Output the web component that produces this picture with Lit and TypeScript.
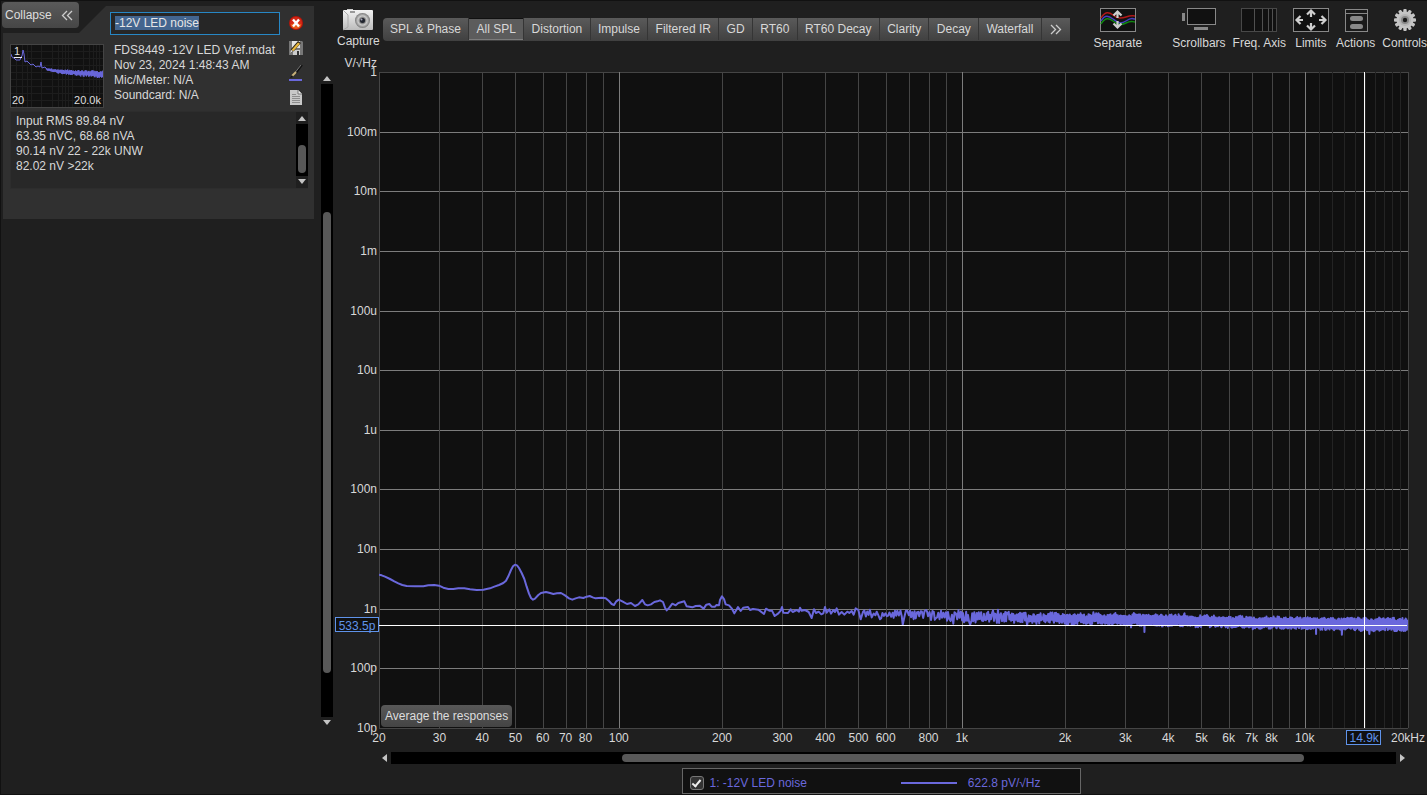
import { LitElement, html, svg, css } from "lit";
import { customElement, state, query } from "lit/decorators.js";
import { classMap } from "lit/directives/class-map.js";

const TABS = [
  "SPL & Phase", "All SPL", "Distortion", "Impulse", "Filtered IR", "GD",
  "RT60", "RT60 Decay", "Clarity", "Decay", "Waterfall",
];

const F_MIN = 20;
const DECADES_X = 3;
const DECADES_Y = 11;

const xPct = (f: number) => `${(Math.log10(f / F_MIN) / DECADES_X) * 100}%`;
const yPct = (v: number) => `${(-Math.log10(v) / DECADES_Y) * 100}%`;

const Y_LABELS = ["1", "100m", "10m", "1m", "100u", "10u", "1u", "100n", "10n", "1n", "100p", "10p"];

const X_LABELS: [number, string][] = [
  [20, "20"], [30, "30"], [40, "40"], [50, "50"], [60, "60"], [70, "70"], [80, "80"],
  [100, "100"], [200, "200"], [300, "300"], [400, "400"], [500, "500"], [600, "600"], [800, "800"],
  [1000, "1k"], [2000, "2k"], [3000, "3k"], [4000, "4k"], [5000, "5k"], [6000, "6k"],
  [7000, "7k"], [8000, "8k"], [10000, "10k"], [20000, "20kHz"],
];

const MINOR = [30, 40, 50, 60, 70, 80, 90, 200, 300, 400, 500, 600, 700, 800, 900,
  2000, 3000, 4000, 5000, 6000, 7000, 8000, 9000];
const FINE = [11, 12, 13, 14, 15, 16, 17, 18, 19].map((k) => k * 1000);
const MAJOR = [100, 1000, 10000];

// Low-frequency part of the spectrum, x/y pairs in trace units.
const LOW: number[] = [
  132, 134, 140, 136, 150, 140, 165, 147, 178, 154, 190, 160, 202, 165, 215, 168, 240, 169, 265, 169, 280, 166, 298, 165,
  312, 167, 325, 173, 340, 177, 355, 177, 370, 175, 388, 175, 405, 178, 425, 180, 445, 179, 465, 175, 478, 170,
  492, 165, 505, 159, 513, 152, 520, 139, 528, 120, 534, 109, 540, 104, 546, 106, 552, 114, 560, 129, 568, 147,
  575, 170, 582, 191, 588, 204, 594, 209, 600, 206, 610, 195, 618, 189, 633, 186, 645, 189, 655, 192, 666, 190,
  678, 189, 690, 196, 702, 205, 712, 209, 722, 205, 732, 202, 745, 204, 755, 200, 764, 198, 773, 202, 782, 205,
  800, 203, 812, 205, 822, 213, 830, 222, 837, 225, 843, 215, 851, 209, 862, 214, 876, 222, 888, 219, 900, 228,
  910, 223, 922, 210, 930, 223, 938, 226, 948, 223, 958, 216, 967, 214, 975, 211, 984, 216, 990, 233, 995, 241,
  1003, 233, 1012, 221, 1022, 226, 1030, 219, 1048, 214, 1055, 229, 1072, 232, 1082, 228, 1094, 227, 1106, 236,
  1114, 224, 1123, 222, 1130, 230, 1140, 230, 1144, 225, 1152, 226, 1155, 210, 1161, 199, 1167, 207, 1172, 223,
  1182, 226, 1190, 235, 1198, 250, 1204, 240, 1209, 231, 1217, 243, 1225, 233, 1239, 231, 1245, 240, 1254, 237,
  1270, 239, 1287, 252, 1293, 236, 1303, 242, 1311, 242, 1319, 258, 1330, 250, 1337, 242, 1341, 231, 1345, 248,
  1359, 249, 1367, 238, 1373, 246, 1385, 240, 1392, 245, 1395, 233, 1400, 242, 1410, 240, 1421, 246, 1430, 264,
  1437, 238, 1443, 249, 1451, 245, 1459, 253, 1465, 250, 1470, 231, 1475, 248, 1483, 238, 1488, 251, 1495, 240,
  1500, 246, 1505, 235, 1512, 254, 1520, 246, 1528, 254, 1537, 245, 1543, 249, 1550, 243, 1556, 254, 1562, 235,
  1570, 240, 1577, 268, 1584, 246,
];

// Noise envelope: x, upper edge, lower edge.
const ENVELOPE: [number, number, number][] = [
  [1584, 240, 264], [1700, 240, 263], [1790, 241, 268], [1895, 245, 277], [2095, 248, 277],
  [2195, 251, 281], [2290, 253, 283], [2500, 254, 287], [2650, 260, 291], [2800, 261, 295],
  [2950, 264, 298], [3219, 266, 304],
];

// Single bins that stand well outside the envelope.
const SPIKES: [number, number][] = [
  [1635, 268], [1702, 284], [1772, 240], [1852, 281], [1904, 284], [1974, 241], [1988, 239],
  [2076, 286], [2274, 247], [2388, 292], [2428, 306], [2548, 250], [2943, 312], [3020, 314], [3103, 312],
];

function random(seed: number) {
  return () => {
    seed = (seed * 1103515245 + 12345) % 2147483648;
    return seed / 2147483648;
  };
}

function buildTrace(): string {
  const pts: string[] = [];
  for (let i = 0; i < LOW.length; i += 2) pts.push(`${LOW[i]},${LOW[i + 1]}`);
  const rnd = random(90421);
  let x = 1588;
  let seg = 0;
  let spike = 0;
  let up = true;
  let drift = 0;
  while (x < 3218) {
    while (seg < ENVELOPE.length - 2 && x > ENVELOPE[seg + 1][0]) seg++;
    const [x0, t0, b0] = ENVELOPE[seg];
    const [x1, t1, b1] = ENVELOPE[seg + 1];
    const k = (x - x0) / (x1 - x0);
    const top = t0 + (t1 - t0) * k;
    const bottom = b0 + (b1 - b0) * k;
    const full = Math.min(1, (x - 1588) / 900);
    drift = drift * 0.8 + (rnd() - 0.5) * 4;
    const low = 0.15 + 0.4 * full;
    const reach = low + (1.05 - low) * rnd();
    const mid = (top + bottom) / 2 + drift;
    let y = mid + (up ? -1 : 1) * reach * (bottom - top) * 0.5;
    if (spike < SPIKES.length && x >= SPIKES[spike][0]) y = SPIKES[spike++][1];
    pts.push(`${x.toFixed(1)},${y.toFixed(1)}`);
    up = rnd() > 0.12 ? !up : up;
    x += Math.max(1.2, 4.5 * (1 - (x - 1588) / 1000)) * (0.7 + 0.6 * rnd());
  }
  return pts.join(" ");
}

const TRACE = buildTrace();

function buildThumbTrace(): string {
  const pts = ["0,10 1,13 3,14 5,16 9,16 10,13 11,12 12,6 13,10 14,18 16,17 18,19 20,21 22,20 25,23 27,22 29,23 30,18 31,24 34,23"];
  const rnd = random(771);
  for (let i = 0; i <= 142; i++) {
    const x = 35 + i * 0.4;
    const k = i / 142;
    const centre = 24.5 + 6 * Math.sqrt(k);
    const amp = (0.8 + 3.2 * Math.sqrt(k)) * (0.4 + 0.6 * rnd());
    pts.push(`${x.toFixed(1)},${(centre + (i % 2 ? amp : -amp)).toFixed(1)}`);
  }
  return pts.join(" ");
}

const THUMB_TRACE = buildThumbTrace();

const base = css`
  *, *::before, *::after { box-sizing: border-box; }
  button { margin: 0; padding: 0; border: 0; background: none; font: inherit; color: inherit; cursor: default; }
  svg { display: block; }
`;

@customElement("scroll-bar")
class ScrollBar extends LitElement {
  static properties = {
    vertical: { type: Boolean, reflect: true },
    start: { type: Number },
    size: { type: Number },
  };
  declare vertical: boolean;
  declare start: number;
  declare size: number;

  static styles = [base, css`
    :host { display: flex; height: 12px; align-items: stretch; }
    :host([vertical]) { flex-direction: column; width: 12px; height: auto; }
    .arrow { flex: none; width: 12px; height: 12px; display: grid; place-items: center; background: #1f1f1f; }
    .arrow path { fill: #c4c4c4; }
    .track { flex: 1; min-height: 0; background: #000; display: flex; padding: 2px 0; }
    :host([vertical]) .track { flex-direction: column; padding: 0 2px; }
    .thumb { flex: none; background: #585858; border-radius: 4px; }
  `];

  render() {
    const v = this.vertical;
    return html`
      <button class="arrow" aria-label=${v ? "Scroll up" : "Scroll left"}>
        <svg width="10" height="10">${v ? svg`<path d="M1 8L5 3L9 8Z"/>` : svg`<path d="M7 1L2 5L7 9Z"/>`}</svg>
      </button>
      <div class="track">
        <div style=${v ? `height:${this.start}%` : `width:${this.start}%`}></div>
        <div class="thumb" style=${v ? `height:${this.size}%` : `width:${this.size}%`}></div>
      </div>
      <button class="arrow" aria-label=${v ? "Scroll down" : "Scroll right"}>
        <svg width="10" height="10">${v ? svg`<path d="M1 2L5 7L9 2Z"/>` : svg`<path d="M3 1L8 5L3 9Z"/>`}</svg>
      </button>`;
  }
}

@customElement("measurement-panel")
class MeasurementPanel extends LitElement {
  @query(".name") nameInput!: HTMLInputElement;

  static styles = [base, css`
    :host { display: block; position: relative; padding: 5px 7px 0 2px; }
    .collapse {
      position: absolute; left: 1px; top: 1px; width: 77px; height: 26px; padding: 0 6px 0 3px;
      display: flex; align-items: center; justify-content: space-between;
      border-radius: 4px; background: linear-gradient(#5a5a5a, #464646); color: #ddd;
    }
    .panel {
      display: grid; grid-template-columns: 94px 170px 1fr; column-gap: 6px;
      grid-template-rows: 23px auto auto; padding: 6px 6px 30px 7px; background: #303030;
      clip-path: polygon(103px 0, 100% 0, 100% 100%, 0 100%, 0 27px, 76px 27px);
    }
    .name {
      grid-column: 2; width: 100%; height: 23px; padding: 0 4px 1px; border: 1px solid #2787c5;
      background: #262626; color: #ddd; font: inherit; line-height: 16px; outline: none;
    }
    .name::selection { background: #43658f; color: #e6e6e6; }
    .thumb { grid-column: 1; grid-row: 2; margin-top: 9px; }
    .thumb text { fill: #ddd; font-size: 11px; }
    .info { grid-column: 2; grid-row: 2; margin-top: 8px; padding-left: 4px; line-height: 15px; white-space: nowrap; }
    .tools {
      grid-column: 3; grid-row: 1 / 3; display: flex; flex-direction: column; align-items: center;
      gap: 9px; padding-top: 3px; margin-right: 3px;
    }
    .notes {
      grid-column: 1 / -1; grid-row: 3; display: flex; height: 78px; margin-top: 3px;
      background: #282828; border: 1px solid #2d2d2d; border-right: 0;
    }
    .notes p { flex: 1; margin: 0; padding: 2px 5px; line-height: 15px; }
  `];

  firstUpdated() {
    this.nameInput.focus();
    this.nameInput.select();
  }

  render() {
    const gx = [6, 12, 17, 21, 31, 42, 48, 52, 55, 58, 62, 73, 79, 83, 86, 89];
    const gy = [7, 14, 21, 28, 35, 42, 49, 56];
    return html`
      <section class="panel">
        <input class="name" aria-label="Measurement name" value="-12V LED noise" />
        <svg class="thumb" width="94" height="64" role="img" aria-label="Spectrum preview">
          <rect x=".5" y=".5" width="93" height="63" fill="#111" stroke="#444" />
          <g shape-rendering="crispEdges" fill="#1d1d1d">
            ${gx.map((x) => svg`<rect x=${x} y="1" width="1" height="62"/>`)}
            ${gy.map((y) => svg`<rect x="1" y=${y} width="92" height="1"/>`)}
          </g>
          <svg x="1" y="0" width="92" height="62"><polyline points=${THUMB_TRACE} fill="none" stroke="#6a68dc" /></svg>
          <text x="4" y="11">1</text>
          <rect x="4" y="13" width="8" height="1" fill="#eee" />
          <text x="2" y="60">20</text>
          <text x="91" y="60" text-anchor="end">20.0k</text>
        </svg>
        <div class="info">
          FDS8449 -12V LED Vref.mdat<br />Nov 23, 2024 1:48:43 AM<br />Mic/Meter: N/A<br />Soundcard: N/A
        </div>
        <div class="tools">
          <button aria-label="Remove measurement">
            <svg width="16" height="16"><circle cx="8" cy="8" r="7" fill="#b81408"/><circle cx="8" cy="8" r="6" fill="#d42a18"/><path d="M2.500 9.500a5.700 5.700 0 0 0 11 0q-5.500-2.500-11 0z" fill="#e8601c"/><path d="M5 4.500l6 7M11 4.500l-6 7" stroke="#fff" stroke-width="2.4"/></svg>
          </button>
          <button aria-label="Save measurement">
            <svg width="16" height="16"><path d="M1 1h13l1 1v13H1z" fill="#777"/><path d="M4 1h8v7H4z" fill="#e4e4e4"/><path d="M5 10h7v5H5z" fill="#ccc"/><path d="M9 11h2v4H9z" fill="#333"/><path d="M2 13l1-4 7-8 3 2-7 8z" fill="#2a2218"/><path d="M3.5 10L10 2.5l2 1.2L5.5 11z" fill="#e8b83c"/><path d="M2 13l1-3 2 1z" fill="#eee"/></svg>
          </button>
          <button aria-label="Trace colour">
            <svg width="16" height="16"><path d="M14 0L8 8" stroke="#111" stroke-width="2"/><path d="M13 0L7.5 7" stroke="#777"/><path d="M8 7l-4 4" stroke="#c9b27a" stroke-width="2"/><path d="M4 10l-2 3 3-1z" fill="#111"/><rect x="1" y="14" width="13" height="2" fill="#6a68dc"/></svg>
          </button>
          <button aria-label="Notes">
            <svg width="14" height="16"><path d="M1 0h8l4 4v11H1z" fill="#c8c8c8"/><path d="M9 0v4h4" fill="#eee" stroke="#777"/><path d="M3 4.5h4M3 6.5h8M3 8.5h8M3 10.5h8M3 12.5h8" stroke="#8c8c8c"/></svg>
          </button>
        </div>
        <div class="notes">
          <p>Input RMS 89.84 nV<br />63.35 nVC, 68.68 nVA<br />90.14 nV 22 - 22k UNW<br />82.02 nV &gt;22k</p>
          <scroll-bar vertical .start=${41} .size=${54}></scroll-bar>
        </div>
      </section>
      <button class="collapse">Collapse
        <svg width="12" height="11"><path d="M6 1L1.5 5.5L6 10M11 1L6.5 5.5L11 10" fill="none" stroke="#ccc" stroke-width="1.3"/></svg>
      </button>`;
  }
}

@customElement("spectrum-chart")
class SpectrumChart extends LitElement {
  static styles = [base, css`
    :host { display: block; position: relative; flex: 1; min-height: 0; margin: 0 19px 24px 46px; }
    .plot { position: absolute; width: 100%; height: 100%; overflow: visible; }
    .crisp { shape-rendering: crispEdges; }
    .back { fill: #101010; }
    .fine { fill: #242424; }
    .minor { fill: #454545; }
    .major { fill: #7c7c7c; }
    .cursor { fill: #fff; }
    .label { fill: #d8d8d8; font-size: 12px; }
    .end { text-anchor: end; }
    .mid { text-anchor: middle; }
    .trace { fill: none; stroke: #6a68dc; stroke-width: 2px; stroke-linejoin: round; vector-effect: non-scaling-stroke; }
    .box { fill: #101010; stroke: #5f93ea; }
    .reading { fill: #5f93ea; font-size: 12px; }
    .average {
      position: absolute; left: 2px; bottom: 1px; height: 22px; padding: 0 4px;
      border-radius: 4px; background: linear-gradient(#585858, #444); color: #ddd;
    }
  `];

  render() {
    const fx = xPct(14900);
    const vy = yPct(533.5e-12);
    return html`
      <svg class="plot" role="img" aria-label="Noise spectral density">
        <g class="crisp">
          <rect class="back" width="100%" height="100%" />
          ${Y_LABELS.map((_, i) => svg`<rect class=${i === 0 || i === DECADES_Y ? "minor" : "major"} x="0" y=${`${(i / DECADES_Y) * 100}%`} width="100%" height="1"/>`)}
          ${FINE.map((f) => svg`<rect class="fine" x=${xPct(f)} width="1" height="100%"/>`)}
          ${MINOR.map((f) => svg`<rect class="minor" x=${xPct(f)} width="1" height="100%"/>`)}
          ${MAJOR.map((f) => svg`<rect class="major" x=${xPct(f)} width="1" height="100%"/>`)}
          <rect class="minor" x="0" width="1" height="100%" />
          <rect class="minor" x="100%" width="1" height="100%" />
        </g>
        <svg width="100%" height="100%" viewBox="132 -1374 3087 1968" preserveAspectRatio="none">
          <polyline class="trace" points=${TRACE} />
        </svg>
        <g class="crisp">
          <rect class="cursor" x="-1" y=${vy} width="100%" height="1" />
          <rect class="cursor" x=${fx} width="1" height="100%" />
        </g>
        <text class="label end" x="-2" y="-5">V/√Hz</text>
        ${Y_LABELS.map((t, i) => svg`<text class="label end" x="-2" y=${`${(i / DECADES_Y) * 100}%`} dy="4">${t}</text>`)}
        ${X_LABELS.map(([f, t]) => svg`<text class="label mid" x=${xPct(f)} y="100%" dy="14">${t}</text>`)}
        <svg x="-44" y=${vy} overflow="visible">
          <rect class="box crisp" x="0" y="-7" width="43" height="14" />
          <text class="reading mid" x="22" y="5">533.5p</text>
        </svg>
        <svg x=${fx} y="100%" overflow="visible">
          <rect class="box crisp" x="-18" y="2" width="34" height="14" />
          <text class="reading mid" x="0" y="14">14.9k</text>
        </svg>
      </svg>
      <button class="average">Average the responses</button>`;
  }
}

const arrow = (deg: number, cx: number, cy: number, d: number) => svg`
  <path transform=${`translate(${cx} ${cy}) rotate(${deg}) translate(0 ${-d})`} d="M0 7V1M-4 4.5L0 .5L4 4.5" fill="none" stroke="#cfcfcf" stroke-width="2.2"/>`;

const ICONS = {
  camera: html`<svg width="32" height="24">
    <defs><radialGradient id="lens"><stop offset="0" stop-color="#333"/><stop offset=".4" stop-color="#888"/><stop offset=".6" stop-color="#ccc"/><stop offset="1" stop-color="#777"/></radialGradient>
    <linearGradient id="body" x2="0" y2="1"><stop offset="0" stop-color="#f2f2f2"/><stop offset="1" stop-color="#bcbcbc"/></linearGradient></defs>
    <rect x="5" y="1" width="6" height="3" fill="#ccc"/><rect x="1" y="2" width="30" height="20" rx="1" fill="url(#body)"/>
    <path d="M1 2l5 5v12l-5 3" fill="none" stroke="#aaa"/><rect x="8" y="3" width="5" height="2" fill="#999"/>
    <circle cx="20.5" cy="12.5" r="7.5" fill="url(#lens)"/><circle cx="20.5" cy="12.5" r="2.5" fill="#20242e"/><circle cx="19.5" cy="11.5" r="1" fill="#aab"/></svg>`,
  separate: html`<svg width="36" height="24"><rect x=".5" y=".5" width="35" height="23" fill="#111" stroke="#888"/>
    <g fill="none" stroke-width="1.5"><path d="M1 10C5 3 9 4 13 7S20 11 26 9S32 8 35 8" stroke="#b01818"/><path d="M1 13C5 6 9 8 13 11S20 17 26 13S32 11 35 11" stroke="#4540c0"/><path d="M1 16C5 9 9 10 13 13S20 18 26 15S32 14 35 14" stroke="#108810"/></g>
    ${arrow(0, 17.5, 9, 6)}${arrow(180, 17.5, 14, 6)}</svg>`,
  scrollbars: html`<svg width="36" height="24"><rect x="1" y="5" width="3" height="8" fill="#888"/><rect x="6.5" y=".5" width="28" height="16" fill="#111" stroke="#888"/><rect x="13" y="19" width="14" height="3" fill="#888"/></svg>`,
  freq: html`<svg width="36" height="24"><rect x=".5" y=".5" width="35" height="23" fill="#111" stroke="#484848"/><path d="M13.5 1v22M21.5 1v22M27.5 1v22M31.5 1v22" stroke="#505050"/></svg>`,
  limits: html`<svg width="36" height="24"><rect x=".5" y=".5" width="35" height="23" fill="#111" stroke="#888"/>
    ${arrow(0, 18, 12, 10)}${arrow(180, 18, 12, 10)}${arrow(90, 18, 12, 15)}${arrow(270, 18, 12, 15)}</svg>`,
  actions: html`<svg width="24" height="24"><rect x="1.5" y="1.5" width="22" height="22" fill="#1a1a1a" stroke="#888"/><path d="M1 5.5h23" stroke="#888"/><rect x="6" y="8" width="13" height="5" rx="2.5" fill="#888"/><rect x="6" y="16" width="13" height="5" rx="2.5" fill="#888"/></svg>`,
  gear: html`<svg width="24" height="24"><g transform="translate(12 12)" fill="#c4c4c4">
    ${Array.from({ length: 12 }, (_, i) => svg`<rect x="-1.7" y="-11" width="3.4" height="5" rx="1" transform=${`rotate(${i * 30})`}/>`)}
    <circle r="8.5"/><circle r="6" fill="#b4b4b4"/><circle r="4" fill="#888"/><circle r="2.2" fill="#181818"/></g></svg>`,
};

@customElement("app-root")
class AppRoot extends LitElement {
  @state() active = "All SPL";

  static styles = [base, css`
    :host { display: block; font-family: "Liberation Sans", Arial, sans-serif; font-size: 12px; color: #d8d8d8; }
    .app {
      display: grid; grid-template-columns: 320px 12px minmax(0, 1fr); height: 100vh;
      border: 1px solid #111; border-right: 0; background: #1f1f1f; overflow: hidden;
    }
    .list-scroll { margin: 71px 0 65px; }
    .main { display: flex; flex-direction: column; min-width: 0; min-height: 0; }
    .toolbar { flex: none; display: flex; align-items: flex-start; height: 71px; padding: 7px 0 0 4px; }
    .tool { flex: none; display: flex; flex-direction: column; align-items: center; gap: 4px; line-height: 14px; white-space: nowrap; }
    .capture { gap: 2px; }
    .tabs {
      flex: none; display: flex; width: 687px; height: 23px; margin: 10px 0 0 3px; padding-bottom: 1px; border-radius: 4px 0 0 4px; overflow: hidden;
      background: linear-gradient(#5a5a5a, #404040);
    }
    .tab { flex: 1 0 auto; padding: 0 7px; border-right: 1px solid #353535; white-space: nowrap; }
    .tab.on { background: #5c5c5c; box-shadow: inset 0 1px #111, inset 0 -1px #7c7c7c; }
    .tab.more { flex: none; border-right: 0; padding: 0 8px; }
    .tools { display: flex; gap: 7px; margin-left: auto; }
    .first { margin-right: 23px; }
    .freq-scroll { flex: none; margin: 0 19px 0 46px; }
    .legend {
      flex: none; align-self: center; display: flex; align-items: center; width: 399px; height: 26px;
      margin: 4px 0 0 2px; padding: 3px 39px 0 7px; border: 1px solid #666; background: #111; color: #6a68dc;
    }
    .legend label { display: flex; align-items: center; gap: 6px; flex: 1; }
    .legend input {
      appearance: none; width: 14px; height: 14px; margin: 0; border: 1px solid #777; border-radius: 3px;
      background: #333; display: grid; place-items: center;
    }
    .legend input:checked::after {
      content: ""; width: 5px; height: 9px; border: solid #eee; border-width: 0 2px 2px 0; transform: rotate(40deg);
    }
    .swatch { width: 56px; height: 2px; margin-right: 11px; background: #6a68dc; }
  `];

  render() {
    return html`
      <div class="app">
        <aside><measurement-panel></measurement-panel></aside>
        <scroll-bar class="list-scroll" vertical .start=${20.3} .size=${72.8}></scroll-bar>
        <main class="main">
          <header class="toolbar">
            <button class="tool capture">${ICONS.camera}Capture</button>
            <nav class="tabs">
              ${TABS.map((t) => html`<button class=${classMap({ tab: true, on: t === this.active })} @click=${() => (this.active = t)}>${t}</button>`)}
              <button class="tab more" aria-label="More graphs">
                <svg width="12" height="11"><path d="M1 1L5.5 5.5L1 10M6 1L10.5 5.5L6 10" fill="none" stroke="#ccc" stroke-width="1.3"/></svg>
              </button>
            </nav>
            <div class="tools">
              <button class="tool first">${ICONS.separate}Separate</button>
              <button class="tool">${ICONS.scrollbars}Scrollbars</button>
              <button class="tool">${ICONS.freq}Freq. Axis</button>
              <button class="tool">${ICONS.limits}Limits</button>
              <button class="tool">${ICONS.actions}Actions</button>
              <button class="tool">${ICONS.gear}Controls</button>
            </div>
          </header>
          <spectrum-chart></spectrum-chart>
          <scroll-bar class="freq-scroll" .start=${23} .size=${67.8}></scroll-bar>
          <footer class="legend">
            <label><input type="checkbox" checked />1: -12V LED noise</label>
            <span class="swatch"></span>
            <span>622.8 pV/√Hz</span>
          </footer>
        </main>
      </div>`;
  }
}
